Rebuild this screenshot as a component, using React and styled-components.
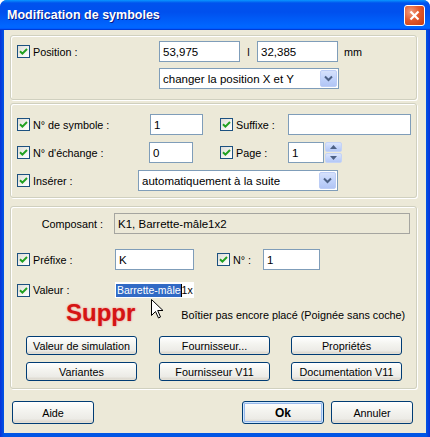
import React from "react";
import styled, { createGlobalStyle } from "styled-components";

const GlobalStyle = createGlobalStyle`
  html, body {
    margin: 0;
    padding: 0;
    background: #ffffff;
  }
  body {
    font-family: "Liberation Sans", Arial, sans-serif;
    font-size: 10.8px;
    color: #000;
  }
`;

//window frame
const Window = styled.div`
  width: 430px;
  height: 437px;
  display: flex;
  flex-direction: column;
  background: linear-gradient(to right, #0831d9, #0055e5 4px, #0055e5 calc(100% - 4px), #0831d9);
  border-radius: 7px 7px 0 0;
  overflow: hidden;
`;

const TitleBar = styled.div`
  height: 30px;
  flex: none;
  display: flex;
  align-items: center;
  justify-content: space-between;
  padding: 0 5px 0 7px;
  background: linear-gradient(
    to bottom,
    #0997ff 0%,
    #0053ee 10%,
    #0050ee 40%,
    #0066ff 86%,
    #0066ff 92%,
    #005bff 95%,
    #003dd7 97%,
    #003dd7 100%
  );
`;

const Title = styled.div`
  color: #fff;
  font-weight: bold;
  font-size: 12.5px;
  text-shadow: 1px 1px 0 #0a1883;
  padding-bottom: 1px;
`;

const CloseButton = styled.div`
  width: 21px;
  height: 21px;
  box-sizing: border-box;
  border: 1px solid #fff;
  border-radius: 3px;
  display: flex;
  align-items: center;
  justify-content: center;
  background: radial-gradient(circle at 30% 30%, #f09d7f 0%, #e35a2e 45%, #c83b10 100%);
`;

const Body = styled.div`
  flex: 1;
  margin: 0 4px 4px 4px;
  background: #ece9d8;
  padding: 5px 9px 0 6px;
  display: flex;
  flex-direction: column;
`;

//group boxes
const Group = styled.div`
  position: relative;
  margin-top: ${(p) => p.$top || 0}px;
  padding: ${(p) => p.$pad};
  border: 1px solid #d0d0bf;
  border-radius: 3px;
  display: flex;
  flex-direction: column;
  box-shadow: inset 1px 1px 0 #fff, 1px 1px 0 #fff;
`;

const Row = styled.div`
  display: flex;
  align-items: center;
  height: ${(p) => p.$h || 21}px;
  margin-top: ${(p) => p.$gap || 0}px;
`;

const CheckField = styled.label`
  width: ${(p) => p.$w}px;
  margin-left: ${(p) => p.$ml || 0}px;
  flex: none;
  display: flex;
  align-items: center;
  gap: 3px;
  white-space: nowrap;
`;

const CheckBox = styled.span`
  width: 13px;
  height: 13px;
  box-sizing: border-box;
  border: 1px solid #1c5180;
  background: linear-gradient(135deg, #dcdcd7 0%, #f4f4f0 60%, #ffffff 100%);
  display: flex;
  align-items: center;
  justify-content: center;
`;

const Label = styled.span`
  width: ${(p) => p.$w}px;
  flex: none;
  text-align: ${(p) => p.$align || "left"};
  padding-right: ${(p) => p.$pr || 0}px;
  box-sizing: border-box;
  white-space: nowrap;
`;

const TextBox = styled.div`
  width: ${(p) => p.$w}px;
  height: ${(p) => p.$h || 21}px;
  margin-left: ${(p) => p.$ml || 0}px;
  flex: none;
  box-sizing: border-box;
  border: 1px solid;
  background: ${(p) => (p.$readonly ? "#ece9d8" : "#fff")};
  border-color: ${(p) => (p.$readonly ? "#a5a5a0" : "#7f9db9")};
  display: flex;
  align-items: center;
  padding-left: 3px;
  font-size: 11.5px;
  white-space: nowrap;
  overflow: hidden;
`;

const Separator = styled.span`
  width: 17px;
  flex: none;
  text-align: center;
`;

const Unit = styled.span`
  margin-left: 6px;
`;

const Select = styled.div`
  width: ${(p) => p.$w}px;
  height: 21px;
  margin-left: ${(p) => p.$ml || 0}px;
  flex: none;
  box-sizing: border-box;
  border: 1px solid #7f9db9;
  background: #fff;
  display: flex;
  align-items: center;
  justify-content: space-between;
  padding: 1px 1px 1px 3px;
  font-size: 11.5px;
`;

const DropButton = styled.span`
  width: 17px;
  height: 17px;
  box-sizing: border-box;
  border: 1px solid #bccdf6;
  border-radius: 2px;
  background: linear-gradient(to bottom, #d6e1fb 0%, #c1d3fb 50%, #b1c5f5 100%);
  display: flex;
  align-items: center;
  justify-content: center;
`;

const Spinner = styled.div`
  width: 17px;
  height: 21px;
  margin-left: 1px;
  display: flex;
  flex-direction: column;
  gap: 1px;
`;

const SpinHalf = styled.span`
  flex: 1;
  box-sizing: border-box;
  border: 1px solid #c4d3f6;
  border-radius: 2px;
  background: linear-gradient(to bottom, #dbe5fc 0%, #c3d4fb 55%, #b4c8f6 100%);
  display: flex;
  align-items: center;
  justify-content: center;
`;

const ValueEdit = styled.div`
  width: 79px;
  height: 16px;
  flex: none;
  background: #fff;
  display: flex;
  align-items: center;
  padding-left: 1px;
  box-sizing: border-box;
  white-space: nowrap;
  font-size: 10.5px;
`;

const Selected = styled.span`
  background: #316ac5;
  color: #fff;
  line-height: 13px;
  padding-left: 1px;
`;

const Caret = styled.span`
  width: 1px;
  height: 13px;
  background: #000;
`;

const Suppr = styled.span`
  margin-left: 49px;
  font-size: 24px;
  font-weight: bold;
  line-height: 28px;
  color: #d41414;
  text-shadow: 0 0 2px rgba(255, 60, 60, 0.7);
`;

const StatusText = styled.span`
  margin-left: 46px;
  padding-top: 4px;
  white-space: nowrap;
`;

const ButtonRow = styled.div`
  display: flex;
  gap: ${(p) => p.$gap}px;
  margin-top: ${(p) => p.$top || 0}px;
  padding-left: ${(p) => p.$pl || 0}px;
`;

const Button = styled.div`
  width: ${(p) => p.$w}px;
  height: ${(p) => p.$h}px;
  margin-left: ${(p) => p.$ml || 0}px;
  flex: none;
  box-sizing: border-box;
  border: 1px solid #003c74;
  border-radius: 3px;
  background: linear-gradient(to bottom, #ffffff 0%, #f4f4f0 40%, #ecebe6 80%, #d6d0c5 100%);
  box-shadow: ${(p) =>
    p.$default
      ? "inset 0 0 0 1px #cee7ff, inset 0 0 0 2px #98b8ea"
      : "inset 0 -1px 0 #e3e0d6"};
  display: flex;
  align-items: center;
  justify-content: center;
  font-weight: ${(p) => (p.$default ? "bold" : "normal")};
  font-size: ${(p) => (p.$default ? "12px" : "10.8px")};
  white-space: nowrap;
`;

const Cursor = styled.svg`
  position: absolute;
  left: 140px;
  top: 92px;
`;

const Check = () => (
  <CheckBox>
    <svg width="9" height="9" viewBox="0 0 9 9">
      <path d="M1 4.2 L3.4 6.6 L8 2" stroke="#21a121" strokeWidth="2" fill="none" />
    </svg>
  </CheckBox>
);

const Chevron = () => (
  <svg width="9" height="7" viewBox="0 0 9 7">
    <path d="M1 1.5 L4.5 5 L8 1.5" stroke="#4d6185" strokeWidth="2" fill="none" />
  </svg>
);

const Dropdown = ({ w, ml, children }) => (
  <Select $w={w} $ml={ml}>
    <span>{children}</span>
    <DropButton>
      <Chevron />
    </DropButton>
  </Select>
);

const App = () => {
  return (
    <>
      <GlobalStyle />
      <Window>
        <TitleBar>
          <Title>Modification de symboles</Title>
          <CloseButton>
            <svg width="11" height="11" viewBox="0 0 11 11">
              <path d="M1.5 1.5 L9.5 9.5 M9.5 1.5 L1.5 9.5" stroke="#fff" strokeWidth="2.2" />
            </svg>
          </CloseButton>
        </TitleBar>
        <Body>
          <Group $pad="5px 0 10px 6px">
            <Row>
              <CheckField $w={142}>
                <Check />
                Position :
              </CheckField>
              <TextBox $w={81}>53,975</TextBox>
              <Separator>l</Separator>
              <TextBox $w={81}>32,385</TextBox>
              <Unit>mm</Unit>
            </Row>
            <Row $gap={6}>
              <Dropdown w={180} ml={142}>
                changer la position X et Y
              </Dropdown>
            </Row>
          </Group>

          <Group $top={3} $pad="10px 0 6px 6px">
            <Row>
              <CheckField $w={133}>
                <Check />
                N° de symbole :
              </CheckField>
              <TextBox $w={53}>1</TextBox>
              <CheckField $w={68} $ml={17}>
                <Check />
                Suffixe :
              </CheckField>
              <TextBox $w={123} />
            </Row>
            <Row $gap={7}>
              <CheckField $w={132}>
                <Check />
                N° d'échange :
              </CheckField>
              <TextBox $w={44}>0</TextBox>
              <CheckField $w={68} $ml={27}>
                <Check />
                Page :
              </CheckField>
              <TextBox $w={36}>1</TextBox>
              <Spinner>
                <SpinHalf>
                  <svg width="7" height="4" viewBox="0 0 7 4">
                    <path d="M0 4 L3.5 0 L7 4 Z" fill="#4d6185" />
                  </svg>
                </SpinHalf>
                <SpinHalf>
                  <svg width="7" height="4" viewBox="0 0 7 4">
                    <path d="M0 0 L3.5 4 L7 0 Z" fill="#4d6185" />
                  </svg>
                </SpinHalf>
              </Spinner>
            </Row>
            <Row $gap={7}>
              <CheckField $w={121}>
                <Check />
                Insérer :
              </CheckField>
              <Dropdown w={200}>automatiquement à la suite</Dropdown>
            </Row>
          </Group>

          <Group $top={8} $pad="6px 0 7px 6px">
            <Row $h={21}>
              <Label $w={97} $align="right" $pr={11}>
                Composant :
              </Label>
              <TextBox $w={296} $readonly>
                K1, Barrette-mâle1x2
              </TextBox>
            </Row>
            <Row $gap={15} $h={21}>
              <CheckField $w={98}>
                <Check />
                Préfixe :
              </CheckField>
              <TextBox $w={79}>K</TextBox>
              <CheckField $w={46} $ml={23}>
                <Check />
                N° :
              </CheckField>
              <TextBox $w={57}>1</TextBox>
            </Row>
            <Row $gap={12} $h={16}>
              <CheckField $w={98}>
                <Check />
                Valeur :
              </CheckField>
              <ValueEdit>
                <Selected>Barrette-mâle</Selected>
                <Caret />
                1x
              </ValueEdit>
            </Row>
            <Row $gap={1} $h={28}>
              <Suppr>Suppr</Suppr>
              <StatusText>Boîtier pas encore placé (Poignée sans coche)</StatusText>
            </Row>
            <ButtonRow $top={9} $gap={22} $pl={9}>
              <Button $w={111} $h={19}>
                Valeur de simulation
              </Button>
              <Button $w={111} $h={19}>
                Fournisseur...
              </Button>
              <Button $w={111} $h={19} $ml={-1}>
                Propriétés
              </Button>
            </ButtonRow>
            <ButtonRow $top={7} $gap={22} $pl={9}>
              <Button $w={111} $h={19}>
                Variantes
              </Button>
              <Button $w={111} $h={19}>
                Fournisseur V11
              </Button>
              <Button $w={111} $h={19} $ml={-1}>
                Documentation V11
              </Button>
            </ButtonRow>
            <Cursor width="13" height="20" viewBox="0 0 13 20">
              <path
                d="M0.5 0.5 L0.5 16.5 L4.5 12.5 L7.5 19 L9.5 18 L6.7 11.5 L12 11.5 Z"
                fill="#fff"
                stroke="#000"
                strokeWidth="1"
              />
            </Cursor>
          </Group>

          <ButtonRow $top={12} $gap={7} $pl={2}>
            <Button $w={82} $h={23}>
              Aide
            </Button>
            <Button $w={82} $h={23} $ml={141} $default>
              Ok
            </Button>
            <Button $w={82} $h={23}>
              Annuler
            </Button>
          </ButtonRow>
        </Body>
      </Window>
    </>
  );
};

export default App;
